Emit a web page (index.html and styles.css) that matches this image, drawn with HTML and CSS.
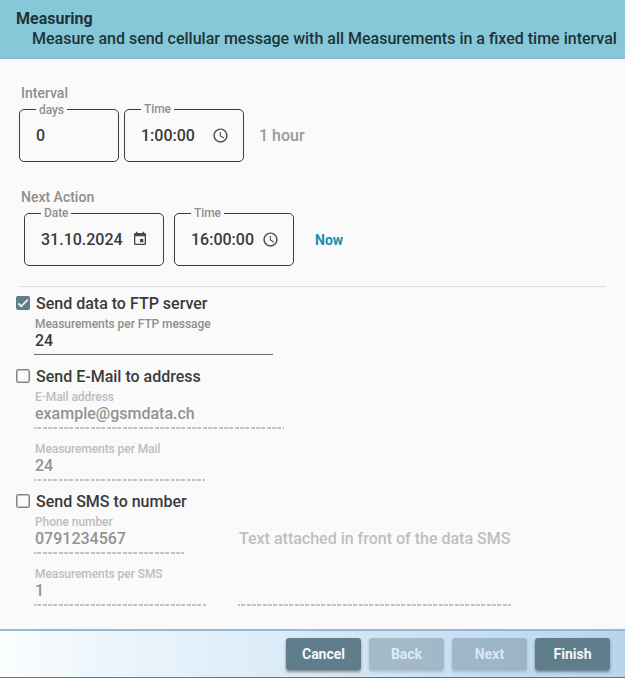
FILE: index.html
```html
<!DOCTYPE html>
<html lang="en">
<head>
<meta charset="utf-8">
<title>Measuring</title>
<link rel="stylesheet" href="styles.css">
</head>
<body>
<header class="head">
  <h1 class="title">Measuring</h1>
  <p class="subtitle">Measure and send cellular message with all Measurements in a fixed time interval</p>
</header>
<main class="content">
  <section class="group">
    <h2 class="group-label">Interval</h2>
    <div class="row">
      <fieldset class="box days"><legend class="low">days</legend><span>0</span></fieldset>
      <fieldset class="box time"><legend>Time</legend><span>1:00:00</span>
        <svg class="icon" viewBox="0 0 24 24"><path d="M11.99 2C6.47 2 2 6.48 2 12s4.47 10 9.99 10C17.52 22 22 17.52 22 12S17.52 2 11.99 2zM12 20c-4.42 0-8-3.58-8-8s3.58-8 8-8 8 3.58 8 8-3.58 8-8 8zm.5-13H11v6l5.250 3.150.75-1.230-4.500-2.670z"/></svg>
      </fieldset>
      <span class="hint">1 hour</span>
    </div>
  </section>
  <section class="group next">
    <h2 class="group-label">Next Action</h2>
    <div class="row">
      <fieldset class="box date"><legend>Date</legend><span>31.10.2024</span>
        <svg class="icon calendar" viewBox="0 0 24 24"><path d="M17 12h-5v5h5v-5zM16 1v2H8V1H6v2H5c-1.110 0-1.990.9-1.990 2L3 19c0 1.100.89 2 2 2h14c1.100 0 2-.9 2-2V5c0-1.100-.9-2-2-2h-1V1h-2zm3 18H5V8h14v11z"/></svg>
      </fieldset>
      <fieldset class="box time"><legend>Time</legend><span>16:00:00</span>
        <svg class="icon" viewBox="0 0 24 24"><path d="M11.99 2C6.47 2 2 6.48 2 12s4.47 10 9.99 10C17.52 22 22 17.52 22 12S17.52 2 11.99 2zM12 20c-4.42 0-8-3.58-8-8s3.58-8 8-8 8 3.58 8 8-3.58 8-8 8zm.5-13H11v6l5.250 3.150.75-1.230-4.500-2.670z"/></svg>
      </fieldset>
      <a class="now">Now</a>
    </div>
  </section>
  <hr class="divider">
  <section class="option">
    <label class="check"><span class="mark checked"><svg viewBox="0 0 24 24"><path d="M4.100 12.700 9 17.600 20.300 6.300"/></svg></span>Send data to FTP server</label>
    <div class="field ftp"><span class="name">Measurements per FTP message</span><span class="value">24</span></div>
  </section>
  <section class="option">
    <label class="check"><span class="mark"></span>Send E-Mail to address</label>
    <div class="field off mail"><span class="name">E-Mail address</span><span class="value">example@gsmdata.ch</span></div>
    <div class="field off permail"><span class="name">Measurements per Mail</span><span class="value">24</span></div>
  </section>
  <section class="option">
    <label class="check"><span class="mark"></span>Send SMS to number</label>
    <div class="sms">
      <div>
        <div class="field off phone"><span class="name">Phone number</span><span class="value">0791234567</span></div>
        <div class="field off persms"><span class="name">Measurements per SMS</span><span class="value">1</span></div>
      </div>
      <div class="field off prefix"><span class="placeholder">Text attached in front of the data SMS</span></div>
    </div>
  </section>
</main>
<footer class="foot">
  <button class="btn">Cancel</button>
  <button class="btn" disabled>Back</button>
  <button class="btn" disabled>Next</button>
  <button class="btn">Finish</button>
</footer>
</body>
</html>
```
FILE: styles.css
```css
* { box-sizing: border-box; }
body {
  margin: 0;
  height: 678px;
  display: flex;
  flex-direction: column;
  overflow: hidden;
  background: #fafafa;
  color: #3a3a3a;
  font: 500 16px/20px Roboto, "Liberation Sans", sans-serif;
}
.head {
  flex: none;
  height: 59px;
  padding: 9px 0 0 16px;
  background: #86c8d8;
  border-bottom: 2px solid #93b5da;
  color: #213236;
  white-space: nowrap;
}
.title, .subtitle { margin: 0; font-size: 16px; }
.title { font-weight: 700; }
.subtitle { padding-left: 16px; font-weight: 500; }
.content { flex: 1; padding-top: 24px; }
.group { height: 104px; padding-left: 19px; }
.group-label {
  margin: 0 0 6px 2px;
  font-size: 14px;
  font-weight: 500;
  line-height: 20px;
  color: #8e8e8e;
}
.row { display: flex; align-items: center; height: 53px; }
.next .row { padding-left: 5px; }
.box {
  position: relative;
  display: flex;
  align-items: center;
  height: 53px;
  margin: 0;
  padding: 0 0 0 16px;
  border: 1px solid #3c3c3c;
  border-radius: 5px;
}
.box legend {
  position: absolute;
  top: -9px;
  left: 16px;
  padding: 0 3px;
  background: #fafafa;
  color: #909090;
  font-size: 12px;
  line-height: 16px;
  letter-spacing: -.07px;
}
.box legend.low { top: -8px; }
.days { width: 100px; margin-right: 5px; }
.time { width: 120px; }
.date { width: 140px; margin-right: 10px; }
.box .icon { position: absolute; right: 14.500px; top: 17px; width: 17px; height: 17px; fill: #484848; }
.box .calendar { right: 15px; width: 16px; height: 16px; }
.hint { margin-left: 15px; color: #999; }
.now { margin: 1px 0 0 21px; font-size: 14px; font-weight: 700; color: #188db5; }
.divider { margin: -5px 19px 6px; border: 0; height: 1px; background: #dcdcdc; }
.check { display: flex; align-items: center; height: 21px; padding-left: 16px; }
.mark {
  width: 14px;
  height: 14px;
  margin: 0 6px 1px 0;
  border: 1px solid #858585;
  border-radius: 2px;
  box-shadow: inset 0 0 0 1px #bdbdbd;
}
.mark.checked { border: 0; box-shadow: none; background: #607d8b; }
.mark svg { display: block; fill: none; stroke: #fafafa; stroke-width: 2.700; }
.field {
  position: relative;
  height: 52px;
  margin-left: 34px;
  padding: 2px 0 0 1px;
  display: flex;
  flex-direction: column;
}
.field::after {
  content: "";
  position: absolute;
  left: 0;
  right: 0;
  top: 40px;
  height: 1px;
  background: #696969;
}
.field.off::after {
  height: 2px;
  background: repeating-linear-gradient(90deg, #c3c3c3 0 2px, #fafafa 2px 3.330px, #c3c3c3 3.330px 5.330px);
}
.name { font-size: 12px; line-height: 16px; letter-spacing: -.07px; color: #8e8e8e; }
.value { line-height: 18px; }
.off .name { color: #bdbdbd; }
.off .value { color: #929292; }
.ftp { width: 239px; }
.mail { width: 250px; }
.permail { width: 171px; }
.phone { width: 150px; }
.persms { width: 172px; }
.sms { display: flex; }
.prefix { width: 273px; height: 104px; margin-left: 32px; padding-top: 17px; }
.field.prefix::after { top: 92px; }
.placeholder { color: #bfbfbf; }
.foot {
  flex: none;
  display: flex;
  gap: 8px;
  justify-content: flex-end;
  height: 49px;
  padding: 7px 15px 0 0;
  border-top: 2px solid #93b8dc;
  border-bottom: 1px solid #707478;
  background: linear-gradient(90deg, #fafefe 0, #eef6fc 16%, #deedf8 40%, #c9dff1 75%, #b8d4ed 100%);
}
.btn {
  width: 75px;
  height: 32px;
  padding: 0;
  border: 0;
  border-radius: 3px;
  background: #607d8b;
  color: #f4f6f7;
  font: 700 14px/20px Roboto, "Liberation Sans", sans-serif;
  box-shadow: 0 2px 3px rgba(0, 0, 0, .4);
}
.btn:disabled { opacity: .4; }
```
